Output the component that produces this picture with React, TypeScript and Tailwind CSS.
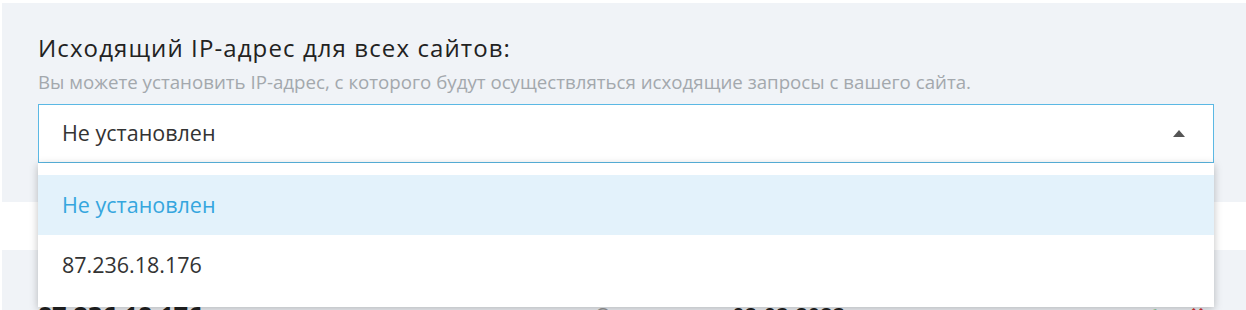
import React from "react";

export default function App() {
  return (
    <div className="w-[1246px] h-[310px] overflow-hidden bg-white pt-[3px] pl-[2px] relative" style={{ fontFamily: '"Open Sans", "Noto Sans", sans-serif' }}>
      <div className="bg-[#f0f3f7] h-[199px] pl-[36px] pr-[32px] pt-[29px]">
        <div className="text-[24px] leading-[32px] tracking-[1.1px] text-[#222]">Исходящий IP-адрес для всех сайтов:</div>
        <div className="text-[18.7px] leading-[24px] text-[#a3a8ad] mt-[6px]">Вы можете установить IP-адрес, с которого будут осуществляться исходящие запросы с вашего сайта.</div>
        <div className="relative mt-[10px] w-[1176px]">
          <div className="h-[59px] border border-[#5bb8e4] bg-white flex items-center justify-between pl-[23px] pr-[28px]">
            <span className="text-[21.5px] text-[#333]">Не установлен</span>
            <svg width="12" height="7" viewBox="0 0 12 7"><path d="M6 0 L12 7 L0 7 Z" fill="#555" /></svg>
          </div>
          <div className="absolute left-0 right-0 top-[59px] bg-white shadow-[0_2px_8px_rgba(0,0,0,0.25)] pt-[12px] pb-[12px] z-10">
            <div className="h-[60px] bg-[#e3f2fb] flex items-center pl-[24px] text-[21.5px] text-[#35a6de]">Не установлен</div>
            <div className="h-[60px] flex items-center pl-[24px] text-[21.5px] text-[#333]">87.236.18.176</div>
          </div>
        </div>
      </div>
      <div className="h-[48px] bg-white" />
      <div className="bg-[#f0f3f7] h-[100px] pl-[36px] pt-[50px] flex items-start">
        <div className="w-[557px] text-[25px] font-bold text-[#222] leading-[30px]">87.236.18.176</div>
        <div className="text-[20px] text-[#999] leading-[30px]">Оплачено до: <span className="font-bold text-[#222] tracking-[1px]">02.03.2023</span></div>
        <div className="ml-auto mr-[40px] flex gap-[30px] text-[20px] leading-[30px]">
          <span className="text-[#4caf50]">✔</span>
          <span className="text-[#d32f2f]">✖</span>
        </div>
      </div>
    </div>
  );
}
